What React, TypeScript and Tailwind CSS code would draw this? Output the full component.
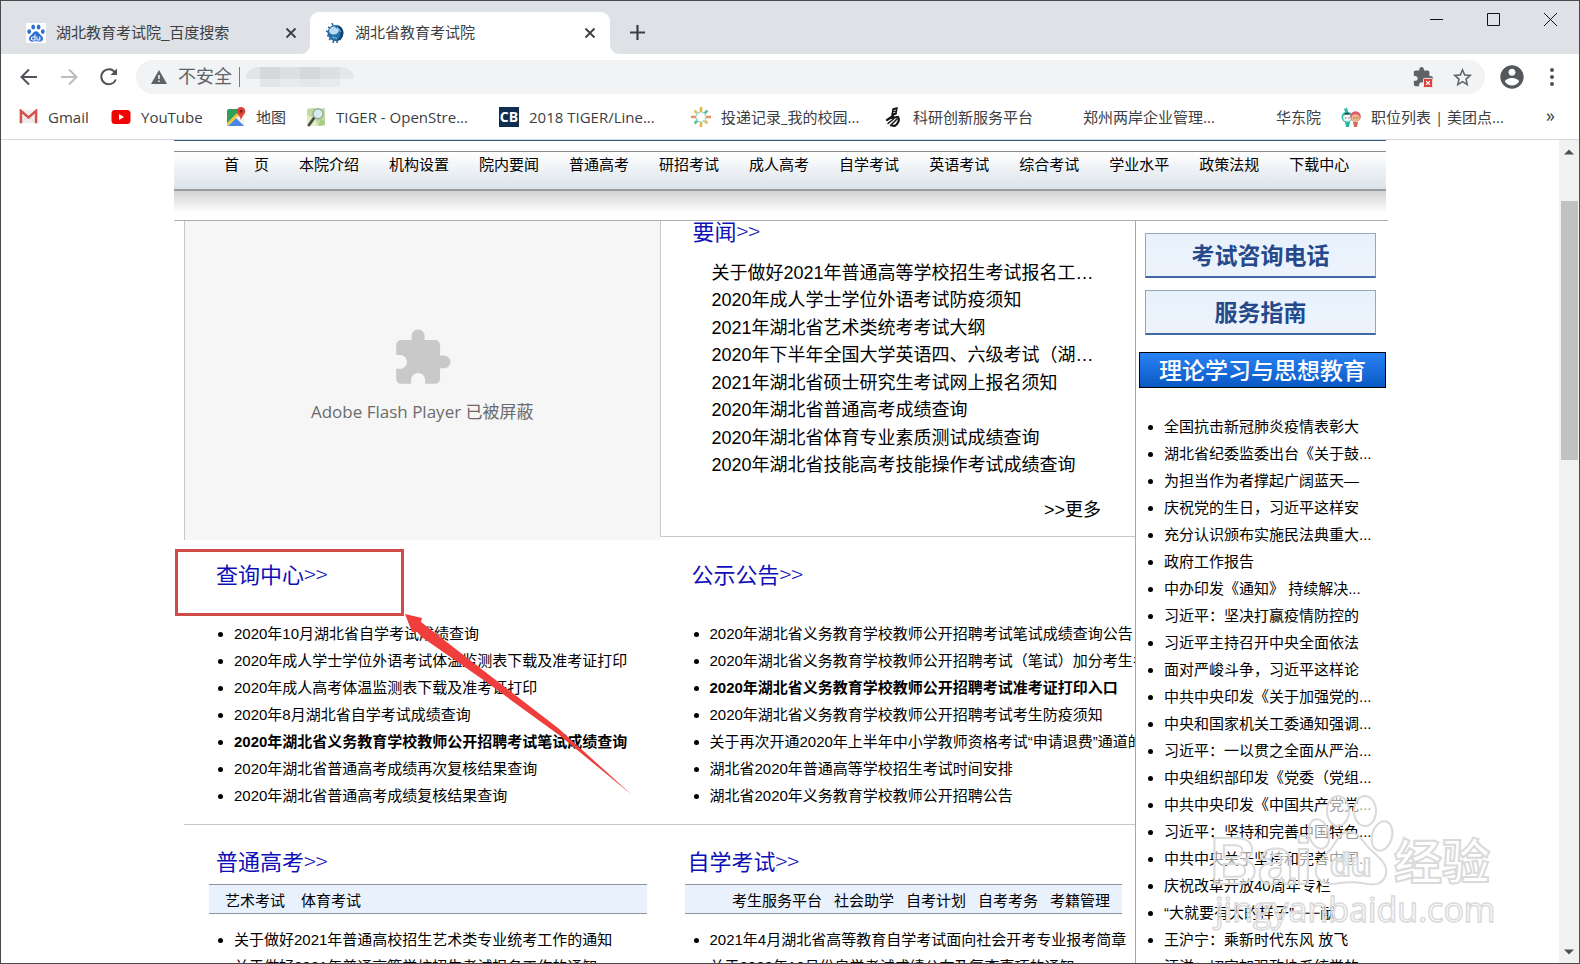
import type { ReactNode } from 'react';
import { clsx } from 'clsx';

interface ListItem {
  text: string;
  bold?: boolean;
}

interface Bookmark {
  label: string;
  icon?: ReactNode;
  className: string;
}

const PUZZLE_PATH =
  'M20.5 11H19V7c0-1.1-.9-2-2-2h-4V3.5C13 2.12 11.88 1 10.5 1S8 2.12 8 3.5V5H4c-1.1 0-1.99.9-1.99 2v3.8H3.5c1.49 0 2.7 1.21 2.7 2.7s-1.21 2.7-2.7 2.7H2V20c0 1.1.9 2 2 2h3.8v-1.5c0-1.49 1.21-2.7 2.7-2.7 1.49 0 2.7 1.21 2.7 2.7V22H17c1.1 0 2-.9 2-2v-4h1.5c1.38 0 2.5-1.12 2.5-2.5S21.88 11 20.5 11z';

const navItems = [
  '首\u3000页', '本院介绍', '机构设置', '院内要闻', '普通高考', '研招考试', '成人高考',
  '自学考试', '英语考试', '综合考试', '学业水平', '政策法规', '下载中心',
];

const newsItems = [
  '关于做好2021年普通高等学校招生考试报名工…',
  '2020年成人学士学位外语考试防疫须知',
  '2021年湖北省艺术类统考考试大纲',
  '2020年下半年全国大学英语四、六级考试（湖…',
  '2021年湖北省硕士研究生考试网上报名须知',
  '2020年湖北省普通高考成绩查询',
  '2020年湖北省体育专业素质测试成绩查询',
  '2020年湖北省技能高考技能操作考试成绩查询',
];

const queryItems: ListItem[] = [
  { text: '2020年10月湖北省自学考试成绩查询' },
  { text: '2020年成人学士学位外语考试体温监测表下载及准考证打印' },
  { text: '2020年成人高考体温监测表下载及准考证打印' },
  { text: '2020年8月湖北省自学考试成绩查询' },
  { text: '2020年湖北省义务教育学校教师公开招聘考试笔试成绩查询', bold: true },
  { text: '2020年湖北省普通高考成绩再次复核结果查询' },
  { text: '2020年湖北省普通高考成绩复核结果查询' },
];

const noticeItems: ListItem[] = [
  { text: '2020年湖北省义务教育学校教师公开招聘考试笔试成绩查询公告' },
  { text: '2020年湖北省义务教育学校教师公开招聘考试（笔试）加分考生名' },
  { text: '2020年湖北省义务教育学校教师公开招聘考试准考证打印入口', bold: true },
  { text: '2020年湖北省义务教育学校教师公开招聘考试考生防疫须知' },
  { text: '关于再次开通2020年上半年中小学教师资格考试“申请退费”通道的' },
  { text: '湖北省2020年普通高等学校招生考试时间安排' },
  { text: '湖北省2020年义务教育学校教师公开招聘公告' },
];

const gaokaoItems: ListItem[] = [
  { text: '关于做好2021年普通高校招生艺术类专业统考工作的通知' },
  { text: '关于做好2021年普通高等学校招生考试报名工作的通知' },
];

const selfStudyItems: ListItem[] = [
  { text: '2021年4月湖北省高等教育自学考试面向社会开考专业报考简章' },
  { text: '关于2020年10月份自学考试成绩公布及复查事项的通知' },
];

const theoryItems: ListItem[] = [
  { text: '全国抗击新冠肺炎疫情表彰大' },
  { text: '湖北省纪委监委出台《关于鼓...' },
  { text: '为担当作为者撑起广阔蓝天—' },
  { text: '庆祝党的生日，习近平这样安' },
  { text: '充分认识颁布实施民法典重大...' },
  { text: '政府工作报告' },
  { text: '中办印发《通知》 持续解决...' },
  { text: '习近平：坚决打赢疫情防控的' },
  { text: '习近平主持召开中央全面依法' },
  { text: '面对严峻斗争，习近平这样论' },
  { text: '中共中央印发《关于加强党的...' },
  { text: '中央和国家机关工委通知强调...' },
  { text: '习近平：一以贯之全面从严治...' },
  { text: '中央组织部印发《党委（党组...' },
  { text: '中共中央印发《中国共产党党...' },
  { text: '习近平：坚持和完善中国特色...' },
  { text: '中共中央关于坚持和完善中国...' },
  { text: '庆祝改革开放40周年专栏' },
  { text: '“大就要有大的样子”−−−献' },
  { text: '王沪宁：乘新时代东风 放飞' },
  { text: '汪洋：切实加强政协系统党的' },
];

/* ---------- icons ---------- */

function BaiduIcon() {
  return (
    <svg viewBox="0 0 20 20" className="size-5 shrink-0">
      <rect width="20" height="20" fill="#fff" />
      <g fill="#2f6fd0">
        <ellipse cx="3.2" cy="8.6" rx="1.9" ry="2.4" />
        <ellipse cx="7.2" cy="4" rx="1.9" ry="2.5" />
        <ellipse cx="12.6" cy="4" rx="1.9" ry="2.5" />
        <ellipse cx="16.8" cy="8.6" rx="1.9" ry="2.4" />
        <path d="M10 8.2c2 0 2.8 1.800 4.200 3.200 1.500 1.400 3.200 2.600 2.700 4.900-.6 2.600-3 2.500-4.600 2.200-1.500-.3-3-.3-4.600 0-1.600.3-4 .4-4.600-2.200-.5-2.300 1.200-3.500 2.700-4.900C7.200 10 8 8.200 10 8.200z" />
      </g>
      <path d="M9 11.500V17H6.800a1.500 1.500 0 010-3H9M11 13.600v2.600c0 .6.4.8.8.8h2v-3.400" fill="none" stroke="#fff" strokeWidth="1.100" />
    </svg>
  );
}

function GlobeIcon() {
  return (
    <svg viewBox="0 0 20 20" className="size-5 shrink-0">
      <circle cx="10.500" cy="10" r="8" fill="#2470a8" />
      <path d="M12 2a8 8 0 016 10c-1 4-4 6-7 6 3-2 5-5 4.500-9C15 6 14 4 12 2z" fill="#153f66" />
      <path d="M4 7c2-3 4-4 6-3.500l1 2 2-1 1 3c-1 3-3 4.500-6 4-3-.5-4-2-4-4.500z" fill="#b9dcf0" />
      <path d="M3 4l2 1M1 8l3 1M2 13l3-1M4 17l2-2M8 20l1-3M12 20v-3M7 0l1 3M16 17l-1-1" stroke="#2e6a98" strokeWidth="1.600" />
      <path d="M7 14l5 1.500M14 6l2 3" stroke="#7fbce0" strokeWidth="1" />
    </svg>
  );
}

function GmailIcon() {
  return (
    <svg viewBox="0 0 20 16" className="w-[19px] shrink-0">
      <path d="M1 1h18v14H1z" fill="#f1efef" />
      <path d="M2 15V2l8 7 8-7v13" fill="none" stroke="#d5524a" strokeWidth="2.600" />
      <path d="M3.500 14.500L8 8.500M16.500 14.500L12 8.500" stroke="#d8d4d4" strokeWidth="1" />
    </svg>
  );
}

function YoutubeIcon() {
  return (
    <svg viewBox="0 0 20 16" className="w-5 shrink-0">
      <rect x="0.500" y="1" width="19" height="14" rx="3.500" fill="#f00505" />
      <path d="M8 5l5.200 3L8 11z" fill="#fff" />
    </svg>
  );
}

function MapsIcon() {
  return (
    <svg viewBox="0 0 20 20" className="size-5 shrink-0">
      <rect x="1" y="2" width="17" height="17" rx="2" fill="#2f9e58" />
      <path d="M1 17L15 3l3 3v11a2 2 0 01-2 2H3z" fill="#f2f2f2" />
      <path d="M2 19l8-8 8 8z" fill="#4a86e8" />
      <path d="M1 16L14 3l2 2L3 18z" fill="#f5c53a" />
      <path d="M15 0c2.500 0 4.300 1.900 4.300 4.200 0 3.200-3.600 4.600-4.300 9-.7-4.400-4.300-5.800-4.300-9C10.700 1.900 12.500 0 15 0z" fill="#db4437" />
      <circle cx="15" cy="4.200" r="1.500" fill="#7b231c" />
    </svg>
  );
}

function OsmIcon() {
  return (
    <svg viewBox="0 0 20 20" className="size-5 shrink-0">
      <path d="M1 2l6-1 6 1 6-1v17l-6 1-6-1-6 1z" fill="#bfdba0" />
      <path d="M1 8l8 4 3 7-11-1z" fill="#e4ecc4" />
      <path d="M14 12l5 2v4l-6 1z" fill="#a9cc86" />
      <path d="M8 11l-5 7" stroke="#454d3f" strokeWidth="2.800" strokeLinecap="round" />
      <circle cx="12" cy="6.800" r="5" fill="#d9eaf0" stroke="#9aa89a" strokeWidth="1.400" />
    </svg>
  );
}

function CensusIcon() {
  return (
    <span className="flex size-5 shrink-0 items-center justify-center bg-[#112e51] font-['Open_Sans',sans-serif] text-sm font-bold text-white">
      CB
    </span>
  );
}

function SunIcon() {
  return (
    <svg viewBox="0 0 20 20" className="size-5 shrink-0" fill="none" strokeWidth="2.600">
      <path d="M10 0v5M10 15v5" stroke="#e8b04a" />
      <path d="M0 10h5M15 10h5" stroke="#ee8f5c" />
      <path d="M3.500 3.500l3 3M13.500 13.500l3 3" stroke="#d9c46c" />
      <path d="M16.500 3.500l-3 3M6.500 13.500l-3 3" stroke="#5cbf9d" />
      <circle cx="10" cy="10" r="4.800" stroke="#9ad8ce" strokeWidth="1.600" strokeDasharray="2.400 1.370" />
    </svg>
  );
}

function BrushIcon() {
  return (
    <svg viewBox="0 0 18 20" className="w-[18px] shrink-0" fill="none" stroke="#151515" strokeLinecap="round">
      <path d="M8 2l4-1-1 6-4 1z" fill="#151515" strokeWidth="1.400" />
      <path d="M9 3.500l1.500-.3M8.600 5.600l1.500-.3" stroke="#fff" strokeWidth="0.800" />
      <path d="M8 9L2 13M6 11l7-1c2 3 0 7-3.500 9l-2.500-.5" strokeWidth="2.200" />
      <path d="M9 11.500L3 16.500M12 12l-6.500 6.500" strokeWidth="1.500" />
    </svg>
  );
}

function MeituanIcon() {
  return (
    <svg viewBox="0 0 20 20" className="size-5 shrink-0">
      <path d="M4 5L3 1l2 1 1-2 1 5zM4 15h5l-1 5H5z" fill="#27b5a6" />
      <circle cx="6" cy="10" r="5.500" fill="#35bfb0" />
      <ellipse cx="6.200" cy="10.800" rx="4" ry="3.600" fill="#eefaf8" />
      <path d="M3 7.500q3-4 6 0z" fill="#333" />
      <path d="M12 15h5l-1 5h-3z" fill="#c9705c" />
      <circle cx="14.500" cy="9.500" r="5.300" fill="#e0566a" />
      <ellipse cx="14.500" cy="11" rx="4.200" ry="3.800" fill="#f2b48a" />
      <path d="M4.800 10.500v1M8 10.500v1M13 10.500v1M16 10.500v1" stroke="#333" strokeWidth="1" />
    </svg>
  );
}

const bookmarks: Bookmark[] = [
  { label: 'Gmail', icon: <GmailIcon />, className: 'w-[92px]' },
  { label: 'YouTube', icon: <YoutubeIcon />, className: 'w-[115px]' },
  { label: '地图', icon: <MapsIcon />, className: 'w-[80px]' },
  { label: 'TIGER - OpenStre...', icon: <OsmIcon />, className: 'w-[193px]' },
  { label: '2018 TIGER/Line...', icon: <CensusIcon />, className: 'w-[192px]' },
  { label: '投递记录_我的校园...', icon: <SunIcon />, className: 'w-[194px]' },
  { label: '科研创新服务平台', icon: <BrushIcon />, className: 'w-[198px]' },
  { label: '郑州两岸企业管理...', className: 'w-[193px]' },
  { label: '华东院', className: 'w-[65px]' },
  { label: '职位列表 | 美团点...', icon: <MeituanIcon />, className: 'w-[180px]' },
];

/* ---------- browser chrome ---------- */

function CloseGlyph() {
  return (
    <svg viewBox="0 0 12 12" className="size-3" stroke="#3c4043" strokeWidth="1.800">
      <path d="M1.500 1.500l9 9M10.500 1.500l-9 9" />
    </svg>
  );
}

function TabStrip() {
  return (
    <div className="flex h-[53px] shrink-0 items-end bg-[#dee1e6] pl-[9px] text-[15px] text-[#3c4043]">
      <div className="flex h-[42px] w-[300px] items-center pr-[13px] pl-4">
        <BaiduIcon />
        <button className="ml-[10px] flex-1 text-left">湖北教育考试院_百度搜索</button>
        <button aria-label="关闭标签页"><CloseGlyph /></button>
      </div>
      <div className="relative flex h-[42px] w-[300px] items-center rounded-t-[9px] bg-white pr-[14px] pl-[15px]">
        <svg viewBox="0 0 9 9" className="absolute bottom-0 -left-[9px] size-[9px]" fill="#fff"><path d="M9 0v9H0a9 9 0 009-9z" /></svg>
        <svg viewBox="0 0 9 9" className="absolute -right-[9px] bottom-0 size-[9px]" fill="#fff"><path d="M0 0v9h9a9 9 0 01-9-9z" /></svg>
        <GlobeIcon />
        <button className="ml-[10px] flex-1 text-left">湖北省教育考试院</button>
        <button aria-label="关闭标签页"><CloseGlyph /></button>
      </div>
      <button aria-label="新标签页" className="mb-[14px] ml-5">
        <svg viewBox="0 0 15 15" className="size-[15px]" stroke="#3c4043" strokeWidth="2.200"><path d="M7.500 0v15M0 7.500h15" /></svg>
      </button>
      <div className="mb-[28px] ml-auto flex items-center gap-11 pr-[22px]">
        <button aria-label="最小化"><svg viewBox="0 0 13 13" className="size-[13px]" stroke="#111"><path d="M0 6.500h13" /></svg></button>
        <button aria-label="最大化"><svg viewBox="0 0 13 13" className="size-[13px]" fill="none" stroke="#111"><path d="M.5.5h12v12H.5z" /></svg></button>
        <button aria-label="关闭"><svg viewBox="0 0 13 13" className="size-[13px]" stroke="#111"><path d="M0 0l13 13M13 0L0 13" /></svg></button>
      </div>
    </div>
  );
}

function Toolbar() {
  return (
    <div className="flex h-[46px] shrink-0 items-center bg-white pl-[18px] text-[#5f6368]">
      <button aria-label="后退" className="w-10">
        <svg viewBox="0 0 20 20" className="size-5" fill="none" stroke="#4f5357" strokeWidth="2"><path d="M18 10H3M10 2.500L2.500 10l7.500 7.500" /></svg>
      </button>
      <button aria-label="前进" className="w-10">
        <svg viewBox="0 0 20 20" className="size-5" fill="none" stroke="#babcbe" strokeWidth="2"><path d="M2 10h15M10 2.500l7.500 7.500-7.500 7.500" /></svg>
      </button>
      <button aria-label="重新加载" className="w-[37px]">
        <svg viewBox="0 0 20 20" className="size-5" fill="none" stroke="#4f5357" strokeWidth="2">
          <path d="M16.800 12.500A7.500 7.500 0 1116 5.500" />
          <path d="M18 1.500V8h-6.500z" fill="#4f5357" stroke="none" />
        </svg>
      </button>
      <div className="flex h-[34px] flex-1 items-center rounded-full bg-[#f1f3f4] pr-[11px] pl-[15px]">
        <svg viewBox="0 0 16 16" className="size-4" fill="#5f6368">
          <path fillRule="evenodd" d="M8 1l8 14H0zM7.200 6v4h1.600V6zM7.200 11.500V13h1.600v-1.500z" />
        </svg>
        <label htmlFor="address" className="ml-[11px] text-lg leading-none">不安全</label>
        <span className="ml-[7px] h-5 w-px bg-[#777b7f]" />
        {/* pixelated address */}
        <span className="ml-[6px] flex h-5 w-[108px] overflow-hidden rounded-t-xl">
          <i className="flex w-[14px] flex-col"><i className="h-3 bg-[#e3e4e5]" /></i>
          <i className="flex w-5 flex-col bg-[#e4e5e6]"><i className="h-3 bg-[#d6d7d8]" /></i>
          <i className="flex w-5 flex-col bg-[#e9eaeb]"><i className="h-3 bg-[#dedfe0]" /></i>
          <i className="flex w-5 flex-col bg-[#e5e6e7]"><i className="h-3 bg-[#d6d7d8]" /></i>
          <i className="flex w-5 flex-col bg-[#e9eaeb]"><i className="h-3 bg-[#dedfe0]" /></i>
          <i className="flex flex-1 flex-col"><i className="h-3 bg-[#e6e7e8]" /></i>
        </span>
        <input id="address" type="text" className="min-w-0 flex-1 bg-transparent outline-none" />
        <button aria-label="扩展程序已停用" className="relative mr-[17px]">
          <svg viewBox="0 0 24 24" className="size-[22px]" fill="#5f6368">
            <path d={PUZZLE_PATH} />
            <rect x="12.500" y="13.500" width="10" height="10" rx="1" fill="#d9443f" stroke="#f1f3f4" strokeWidth="1" />
            <path d="M15.500 16.500l4 4M19.500 16.500l-4 4" stroke="#fff" strokeWidth="1.400" />
          </svg>
        </button>
        <button aria-label="收藏">
          <svg viewBox="0 0 24 24" className="size-[23px]" fill="#5f6368">
            <path d="M22 9.240l-7.190-.62L12 2 9.190 8.630 2 9.240l5.460 4.730L5.820 21 12 17.270 18.180 21l-1.630-7.030L22 9.240zM12 15.400l-3.760 2.270 1-4.280-3.320-2.880 4.380-.38L12 6.100l1.710 4.040 4.380.38-3.320 2.880 1 4.280L12 15.400z" />
          </svg>
        </button>
      </div>
      <button aria-label="用户" className="ml-[13px]">
        <svg viewBox="0 0 24 24" className="size-7" fill="#54585c">
          <path d="M12 2C6.480 2 2 6.480 2 12s4.480 10 10 10 10-4.480 10-10S17.520 2 12 2zm0 3c1.660 0 3 1.340 3 3s-1.340 3-3 3-3-1.340-3-3 1.340-3 3-3zm0 14.200c-2.500 0-4.710-1.280-6-3.220.03-1.990 4-3.080 6-3.080 1.990 0 5.970 1.090 6 3.080-1.290 1.940-3.500 3.220-6 3.220z" />
        </svg>
      </button>
      <button aria-label="菜单" className="mr-[25px] ml-6">
        <svg viewBox="0 0 4 18" className="h-[18px] w-1" fill="#4f5357"><circle cx="2" cy="2" r="2" /><circle cx="2" cy="9" r="2" /><circle cx="2" cy="16" r="2" /></svg>
      </button>
    </div>
  );
}

function BookmarksBar() {
  return (
    <div className="flex h-10 shrink-0 items-center border-b border-[#d5dae0] bg-white pb-[5px] pl-[18px] font-['Open_Sans','Noto_Sans_CJK_SC',sans-serif] text-[15px] text-[#3c4043]">
      {bookmarks.map((item) => (
        <a key={item.label} href="#" className={clsx('flex items-center gap-[10px] whitespace-nowrap', item.className)}>
          {item.icon}
          <span>{item.label}</span>
        </a>
      ))}
      <button aria-label="更多书签" className="mr-6 ml-auto pb-1 text-lg leading-none">»</button>
    </div>
  );
}

function Scrollbar() {
  return (
    <div className="flex w-5 shrink-0 flex-col items-end bg-[#f1f1f1] pr-px">
      <svg viewBox="0 0 10 6" className="mt-[9px] mr-1 w-[10px]" fill="#505050"><path d="M0 5.500L5 .5l5 5z" /></svg>
      <div className="mt-[46px] h-[259px] w-[17px] bg-[#c1c1c1]" />
      <svg viewBox="0 0 10 6" className="mt-auto mr-1 mb-2 w-[10px]" fill="#505050"><path d="M0 .5h10l-5 5z" /></svg>
    </div>
  );
}

/* ---------- page ---------- */

function SectionTitle({ children, className }: { children: ReactNode; className?: string }) {
  return (
    <h2 className={clsx('text-[22px] leading-[30px] text-[#0f0fb8]', className)}>
      <a href="#">
        {children}
        <span className="font-['Noto_Sans_CJK_SC',sans-serif] leading-none font-light">&gt;&gt;</span>
      </a>
    </h2>
  );
}

function BulletList({ items, className }: { items: ListItem[]; className?: string }) {
  return (
    <ul className={clsx('list-disc text-[15px] leading-[27px]', className)}>
      {items.map((item) => (
        <li key={item.text} className="whitespace-nowrap">
          <a href="#" className={item.bold ? 'font-bold' : undefined}>{item.text}</a>
        </li>
      ))}
    </ul>
  );
}

function SiteNav() {
  return (
    <header>
      <div className="h-px bg-[#2d5680]" />
      <nav className="mt-[10px] h-10 border-t border-b-2 border-t-[#8d8f84] border-b-[#989c9f] bg-linear-to-b from-white to-[#dbe3ea]">
        <ul className="flex gap-[30px] pt-[2px] pl-[50px] text-[15px] leading-[22px]">
          {navItems.map((item) => (
            <li key={item} className="whitespace-nowrap"><a href="#">{item}</a></li>
          ))}
        </ul>
      </nav>
      <div className="h-[29px] bg-linear-to-b from-[#d3d3d3] to-white to-75%" />
      <div className="-mr-[2px] h-px bg-[#adadad]" />
    </header>
  );
}

function FlashPanel() {
  return (
    <div className="flex h-[319px] flex-col items-center border-l border-[#c8c8c8] bg-[#f6f6f6] pt-[106px] text-[#6b6b6b]">
      <svg viewBox="0 0 24 24" className="size-[62px]" fill="#c9c9c9"><path d={PUZZLE_PATH} /></svg>
      <p className="mt-[10px] font-['Open_Sans','Noto_Sans_CJK_SC',sans-serif] text-[17px]">Adobe Flash Player 已被屏蔽</p>
    </div>
  );
}

function NewsPanel() {
  return (
    <div className="border-b border-l border-[#c8c8c8] pr-[34px] pb-3 pl-8">
      <SectionTitle className="-mt-[3px]">要闻</SectionTitle>
      <ul className="mt-3 ml-[19px] flex h-[219px] flex-col justify-between text-lg leading-[27px]">
        {newsItems.map((item) => (
          <li key={item} className="whitespace-nowrap"><a href="#">{item}</a></li>
        ))}
      </ul>
      <p className="mt-[18px] text-right text-lg leading-[27px]"><a href="#">&gt;&gt;更多</a></p>
    </div>
  );
}

function Highlight() {
  return (
    <>
      <div className="absolute top-[9px] -left-[9px] h-[67px] w-[229px] border-[3px] border-[#d04a4a]" />
      <svg viewBox="0 0 228 182" className="absolute top-[73px] left-[220px] h-[182px] w-[228px]">
        <path d="M1 1l17 4-1 4 63 49 74 57 74 67-73-60-77-56L19 25l-6-6-5 0z" fill="#ef3e3c" />
      </svg>
    </>
  );
}

function Sidebar() {
  const buttonClass =
    'h-[45px] w-full border border-b-2 border-[#9aa7b8] border-b-[#4169a4] bg-linear-to-b from-[#e8f2fc] to-[#edf3fd] pt-[3px] text-[23px] leading-none font-bold text-[#25498a]';
  return (
    <aside className="w-[251px] shrink-0 border-l border-[#a6a6a6] pt-3">
      <div className="flex flex-col gap-3 pr-[10px] pl-[9px]">
        <button className={buttonClass}>考试咨询电话</button>
        <button className={buttonClass}>服务指南</button>
      </div>
      <div className="mt-[17px] pl-[3px]">
        <button className="h-9 w-full border border-black bg-linear-to-b from-[#2a83f5] to-[#0859c4] pt-[2px] text-[23px] leading-none font-medium text-white">
          理论学习与思想教育
        </button>
      </div>
      <BulletList items={theoryItems} className="mt-[25px] pl-7" />
    </aside>
  );
}

function Watermark() {
  return (
    <svg
      viewBox="0 0 300 150"
      className="pointer-events-none absolute right-[78px] bottom-[23px] h-[150px] w-[300px]"
      fill="#fff"
      fillOpacity="0.6"
      stroke="#dadada"
      strokeWidth="2"
    >
      <text x="9" y="94" fontSize="66" fontWeight="700" fontFamily="Liberation Sans, sans-serif">Bai</text>
      <ellipse cx="118" cy="44" rx="10" ry="15" transform="rotate(-15 118 44)" />
      <ellipse cx="137" cy="21" rx="11" ry="15" />
      <ellipse cx="164" cy="21" rx="11" ry="15" />
      <ellipse cx="181" cy="46" rx="10" ry="15" transform="rotate(15 181 46)" />
      <path d="M147 42c12 0 15 11 23 18 9 8 17 15 15 24-3 13-16 11-24 9-8-1-14-1-22 0-8 2-21 2-24-9-2-9 6-16 14-24 7-7 8-18 18-18z" />
      <text x="129" y="86" fontSize="34" fontWeight="700" fontFamily="Liberation Sans, sans-serif">du</text>
      <text x="193" y="89" fontSize="48" fontWeight="700" fontFamily="Noto Sans CJK SC, sans-serif">经验</text>
      <text x="14" y="132" fontSize="34" fontFamily="Open Sans, sans-serif" strokeWidth="1.500">jingyanbaidu.com</text>
    </svg>
  );
}

export default function App() {
  return (
    <div className="flex h-screen flex-col overflow-hidden border border-[#4b484b] bg-white font-['Liberation_Sans','Noto_Sans_CJK_SC',sans-serif] text-black">
      <TabStrip />
      <Toolbar />
      <BookmarksBar />
      <div className="relative flex min-h-0 flex-1">
        <div className="min-w-0 flex-1 overflow-hidden">
          <div className="mx-auto w-full max-w-[1212px]">
            <SiteNav />
            <div className="flex">
              <main className="min-w-0 flex-1 pl-[10px]">
                <div className="grid grid-cols-2 items-start">
                  <FlashPanel />
                  <NewsPanel />
                </div>
                <div className="relative grid grid-cols-2 border-b border-[#c8c8c8] pb-[15px]">
                  <section className="overflow-hidden pt-[21px]">
                    <SectionTitle className="pl-8">查询中心</SectionTitle>
                    <BulletList items={queryItems} className="mt-[29px] pl-[50px]" />
                  </section>
                  <section className="overflow-hidden pt-[21px]">
                    <SectionTitle className="pl-8">公示公告</SectionTitle>
                    <BulletList items={noticeItems} className="mt-[29px] pl-[50px]" />
                  </section>
                  <Highlight />
                </div>
                <div className="grid grid-cols-2">
                  <section className="overflow-hidden pt-[23px]">
                    <SectionTitle className="pl-8">普通高考</SectionTitle>
                    <div className="mt-[6px] mr-[13px] ml-[25px] flex h-[30px] items-center gap-4 border-y border-[#8e949c] bg-[#e9f1fd] pt-1 pl-4 text-[15px]">
                      <a href="#">艺术考试</a>
                      <a href="#">体育考试</a>
                    </div>
                    <BulletList items={gaokaoItems} className="mt-3 pl-[50px]" />
                  </section>
                  <section className="overflow-hidden pt-[23px]">
                    <SectionTitle className="pl-7">自学考试</SectionTitle>
                    <div className="mt-[6px] mr-[13px] ml-[25px] flex h-[30px] items-center justify-end gap-3 border-y border-[#8e949c] bg-[#e9f1fd] pt-1 pr-3 text-[15px]">
                      <a href="#">考生服务平台</a>
                      <a href="#">社会助学</a>
                      <a href="#">自考计划</a>
                      <a href="#">自考考务</a>
                      <a href="#">考籍管理</a>
                    </div>
                    <BulletList items={selfStudyItems} className="mt-3 pl-[50px]" />
                  </section>
                </div>
              </main>
              <Sidebar />
            </div>
          </div>
        </div>
        <Scrollbar />
        <Watermark />
      </div>
    </div>
  );
}
